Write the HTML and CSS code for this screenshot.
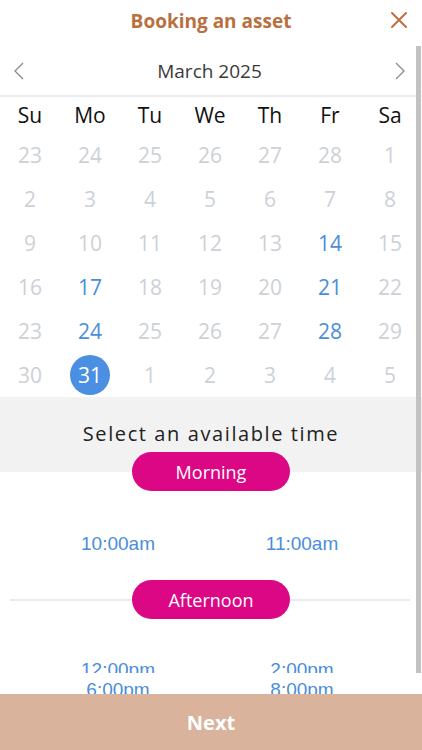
FILE: index.html
```html
<!DOCTYPE html>
<html lang="en">
<head>
<meta charset="utf-8">
<title>Booking an asset</title>
<link rel="stylesheet" href="styles.css">
</head>
<body>
<div class="screen">
  <header class="topbar">
    <h1 class="title">Booking an asset</h1>
    <button class="close" aria-label="Close">
      <svg width="18" height="18" viewBox="0 0 18 18"><path d="M2 2 L16 16 M16 2 L2 16" stroke="#c0703e" stroke-width="2" fill="none" stroke-linecap="round"/></svg>
    </button>
  </header>

  <div class="month">
    <svg class="chev" width="12" height="18" viewBox="0 0 12 18"><path d="M10 1 L2 9 L10 17" stroke="#8a8f95" stroke-width="1.4" fill="none"/></svg>
    <span class="month-name">March 2025</span>
    <svg class="chev" width="12" height="18" viewBox="0 0 12 18"><path d="M2 1 L10 9 L2 17" stroke="#8a8f95" stroke-width="1.4" fill="none"/></svg>
  </div>

  <div class="cal">
    <div class="wd">Su</div><div class="wd">Mo</div><div class="wd">Tu</div><div class="wd">We</div><div class="wd">Th</div><div class="wd">Fr</div><div class="wd">Sa</div>
    <div class="d">23</div><div class="d">24</div><div class="d">25</div><div class="d">26</div><div class="d">27</div><div class="d">28</div><div class="d">1</div>
    <div class="d">2</div><div class="d">3</div><div class="d">4</div><div class="d">5</div><div class="d">6</div><div class="d">7</div><div class="d">8</div>
    <div class="d">9</div><div class="d">10</div><div class="d">11</div><div class="d">12</div><div class="d">13</div><div class="d av">14</div><div class="d">15</div>
    <div class="d">16</div><div class="d av">17</div><div class="d">18</div><div class="d">19</div><div class="d">20</div><div class="d av">21</div><div class="d">22</div>
    <div class="d">23</div><div class="d av">24</div><div class="d">25</div><div class="d">26</div><div class="d">27</div><div class="d av">28</div><div class="d">29</div>
    <div class="d">30</div><div class="d"><span class="sel">31</span></div><div class="d">1</div><div class="d">2</div><div class="d">3</div><div class="d">4</div><div class="d">5</div>
  </div>

  <div class="select-band">Select an available time</div>

  <div class="period first"><span class="pill">Morning</span></div>
  <div class="times"><span>10:00am</span><span>11:00am</span></div>

  <div class="period lined"><span class="pill">Afternoon</span></div>
  <div class="times clip r1"><span>12:00pm</span><span>2:00pm</span></div>
  <div class="times clip r2"><span>6:00pm</span><span>8:00pm</span></div>

  <div class="scrollbar"></div>
  <footer class="next">Next</footer>
</div>
</body>
</html>
```
FILE: styles.css
```css
* { box-sizing: border-box; }
html, body { margin: 0; padding: 0; background: #fff; }
body { font-family: "Open Sans", "Noto Sans", sans-serif; }
.screen { position: relative; width: 422px; height: 750px; overflow: hidden; background: #fff; }

.topbar { height: 46px; display: flex; align-items: center; justify-content: center; position: relative; padding-bottom: 4px; }
.title { margin: 0; font-size: 19px; font-weight: 700; color: #b8703f; line-height: 24px; }
.close { position: absolute; right: 14px; top: 11px; border: 0; background: none; padding: 0; width: 18px; height: 18px; }
.close svg { display: block; }

.month { height: 51px; display: flex; align-items: center; justify-content: space-between; padding: 0 16px 0 13px; border-bottom: 2px solid #e9ebee; }
.month-name { font-size: 19px; color: #3a3a3a; }
.chev { display: block; }

.cal { display: grid; grid-template-columns: repeat(7, 60px); grid-auto-rows: 44px; grid-template-rows: 36px; }
.wd { display: flex; align-items: center; justify-content: center; font-size: 21px; color: #111; }
.d { display: flex; align-items: center; justify-content: center; font-size: 21px; color: #cdd1d6; }
.d.av { color: #4a8ddc; }
.sel { width: 40px; height: 40px; border-radius: 50%; background: #4a8fe1; color: #fff; display: flex; align-items: center; justify-content: center; }

.select-band { height: 75px; background: #f2f2f2; padding-top: 24px; text-align: center; font-size: 20px; letter-spacing: 1.6px; line-height: 26px; color: #222; }

.period { display: flex; justify-content: center; position: relative; }
.period.first { margin-top: -20px; }
.period.lined { margin-top: 25px; }
.period.lined::before { content: ""; position: absolute; left: 10px; right: 12px; top: 19px; height: 2px; background: #e8ecef; }
.pill { position: relative; width: 158px; height: 39px; border-radius: 20px; background: #dc0784; color: #fff; font-size: 18px; display: flex; align-items: center; justify-content: center; }

.times { display: grid; grid-template-columns: 1fr 1fr; padding: 0 28px 0 26px; margin-top: 42px; font-family: "Liberation Sans", Arial, sans-serif; font-size: 19px; line-height: 22px; color: #4a8ddc; }
.times span { text-align: center; }
.times.clip { overflow: hidden; }
.times.r1 { margin-top: 40px; height: 14px; }
.times.r2 { margin-top: 6px; height: 22px; }

.scrollbar { position: absolute; left: 416px; top: 46px; width: 5px; height: 627px; background: #c2c2c2; }
.next { position: absolute; left: 0; right: 0; bottom: 0; height: 56px; background: #d9b39c; color: #fff; font-size: 20px; font-weight: 700; display: flex; align-items: center; justify-content: center; }
```
